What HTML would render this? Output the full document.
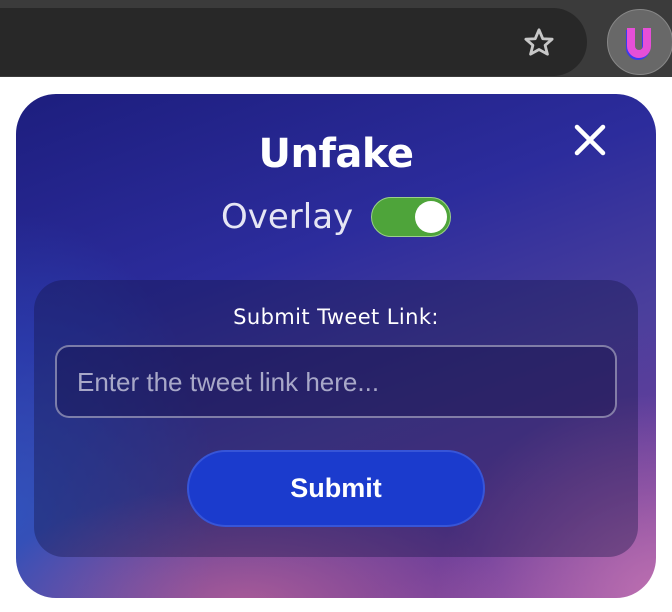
<!DOCTYPE html>
<html><head><style>
body{margin:0;width:672px;height:612px;background:#fff;position:relative;overflow:hidden;font-family:"Liberation Sans",sans-serif}
.top{position:absolute;left:0;top:0;width:672px;height:77px;background:#3b3b3b}
.addr{position:absolute;left:0;top:8px;width:587px;height:68px;background:#282828;border-radius:0 34px 34px 0}
.ext{position:absolute;left:607px;top:9px;width:66px;height:66px;border-radius:33px;background:#686868;border:1px solid #888;box-sizing:border-box}
.card{position:absolute;left:16px;top:94px;width:640px;height:504px;border-radius:40px;overflow:hidden;
background:
radial-gradient(ellipse 260px 120px at 230px 510px,rgba(190,100,150,.75),transparent),
radial-gradient(ellipse 220px 200px at 640px 500px,rgba(200,120,180,.8),transparent),
radial-gradient(ellipse 200px 300px at 0px 420px,rgba(40,90,200,.7),transparent),
linear-gradient(160deg,#1d1e7e 0%,#2c2c9c 35%,#4a3f9c 60%,#6a3d9a 85%,#8a4aa0 100%)}
.inner{position:absolute;left:18px;top:186px;width:604px;height:277px;border-radius:30px;background:rgba(20,20,70,.38)}
h1{position:absolute;top:37px;left:0;width:640px;text-align:center;margin:0;color:#fff;font-size:40px;font-weight:bold;font-family:"DejaVu Sans",sans-serif;letter-spacing:-0.5px}
.ov{position:absolute;left:205px;top:103px;color:#e6e6f4;font-size:34px;font-family:"DejaVu Sans",sans-serif}
.tog{position:absolute;left:355px;top:103px;width:80px;height:40px;border-radius:20px;background:#4ea43a;box-sizing:border-box;border:1px solid #9bd08a}
.tog i{position:absolute;right:3px;top:3px;width:32px;height:32px;border-radius:50%;background:#fff}
.lbl{position:absolute;top:211px;left:0;width:640px;text-align:center;color:#fff;font-size:21px;letter-spacing:0.4px;font-family:"DejaVu Sans",sans-serif}
.inp{position:absolute;left:39px;top:251px;width:562px;height:73px;border:2px solid rgba(200,200,220,.55);border-radius:14px;box-sizing:border-box;background:rgba(20,15,70,.35);color:#a8a8c8;font-size:26px;line-height:70px;padding-left:20px}
.btn{position:absolute;left:171px;top:356px;width:298px;height:77px;border-radius:39px;background:#1b3bcd;border:2px solid #3755d8;box-sizing:border-box;color:#fff;font-weight:bold;font-size:27px;text-align:center;line-height:73px}
</style></head><body>
<div class="top"></div>
<div class="addr"></div>
<svg style="position:absolute;left:523px;top:27px" width="32" height="30" viewBox="0 0 34 32"><path d="M17 3 L21 12.5 L31 13 L23.5 19.5 L26 29 L17 24 L8 29 L10.5 19.5 L3 13 L13 12.5 Z" fill="none" stroke="#c8c8c8" stroke-width="3" stroke-linejoin="round"/></svg>
<div class="ext"></div>
<svg style="position:absolute;left:625px;top:24px" width="30" height="36" viewBox="0 0 30 36"><path d="M6 4 V22 A8 8 0 0 0 22 22 V4" fill="none" stroke="#3a3af0" stroke-width="8" transform="translate(-1,2)"/><path d="M6 4 V22 A8 8 0 0 0 22 22 V4" fill="none" stroke="#e64fd8" stroke-width="8"/></svg>
<div class="card">
<h1>Unfake</h1>
<svg style="position:absolute;left:558px;top:30px" width="32" height="32" viewBox="0 0 32 32"><path d="M3 3 L29 29 M29 3 L3 29" stroke="#fff" stroke-width="4.5" stroke-linecap="round"/></svg>
<div class="ov">Overlay</div>
<div class="tog"><i></i></div>
<div class="inner"></div>
<div class="lbl">Submit Tweet Link:</div>
<div class="inp">Enter the tweet link here...</div>
<div class="btn">Submit</div>
</div>
</body></html>
